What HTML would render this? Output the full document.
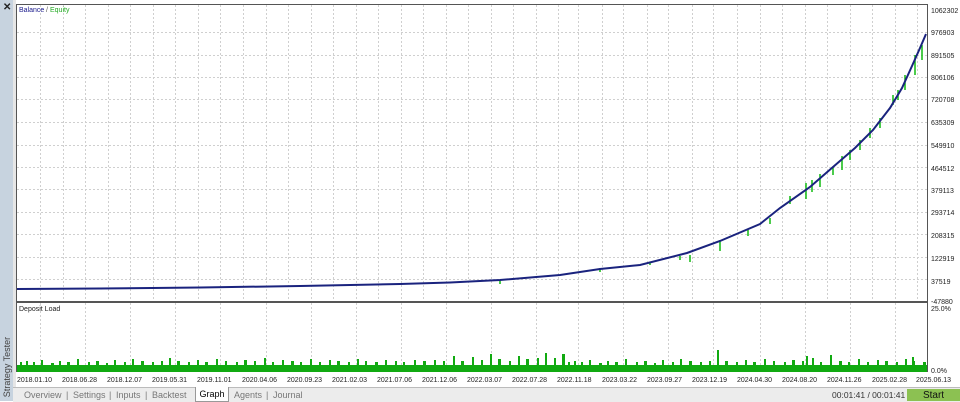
<!DOCTYPE html>
<html><head><meta charset="utf-8"><style>
html,body{margin:0;padding:0;width:960px;height:401px;overflow:hidden;background:#fff;font-family:"Liberation Sans",sans-serif}
.side{position:absolute;left:0;top:0;width:13px;height:401px;background:#c7d3df}
.x{position:absolute;left:3px;top:2px;font-size:10px;font-weight:bold;color:#222}
.vt{position:absolute;left:-28px;top:362px;transform:rotate(-90deg);font-size:9px;color:#444;width:70px;text-align:center}
.tabs{position:absolute;left:13px;top:387px;width:947px;height:14px;background:#ececec;border-top:1px solid #bbb;font-size:9px;color:#777}
.tabs span{position:absolute;top:2px}
.graph{position:absolute;left:182px;top:-1px;width:32px;height:14px;background:#fff;border:1px solid #999;border-top:none;color:#000;text-align:center;line-height:14px}
.start{position:absolute;left:907px;top:389px;width:53px;height:12px;background:#8cc152;font-size:10px;text-align:center;line-height:13px;color:#111}
.time{position:absolute;left:832px;top:390px;font-size:8.5px;color:#333;white-space:nowrap}
</style></head><body>
<div class="side"><div class="x">✕</div><div class="vt">Strategy Tester</div></div>
<svg width="960" height="401" style="position:absolute;left:0;top:0" font-family="Liberation Sans" font-size="7">
<defs><clipPath id="dc"><rect x="17" y="303" width="910" height="69"/></clipPath></defs>
<rect x="13" y="0" width="3" height="387" fill="#e6e6e6"/>
<rect x="16.5" y="4.5" width="911" height="297" fill="#fff" stroke="#555"/>
<rect x="16.5" y="302.5" width="911" height="69" fill="#fff" stroke="#555"/>
<g stroke="#cfcfcf" stroke-dasharray="2,2" stroke-width="1">
<path d="M17 32.5H927M17 55.5H927M17 77.5H927M17 99.5H927M17 122.5H927M17 145.5H927M17 167.5H927M17 189.5H927M17 212.5H927M17 234.5H927M17 257.5H927M17 279.5H927"/>
<path d="M40.5 5V301M63.5 5V301M85.5 5V301M108.5 5V301M130.5 5V301M153.5 5V301M175.5 5V301M198.5 5V301M220.5 5V301M243.5 5V301M266.5 5V301M288.5 5V301M311.5 5V301M333.5 5V301M356.5 5V301M378.5 5V301M401.5 5V301M423.5 5V301M446.5 5V301M468.5 5V301M491.5 5V301M513.5 5V301M536.5 5V301M558.5 5V301M578.5 5V301M602.5 5V301M623.5 5V301M647.5 5V301M668.5 5V301M692.5 5V301M713.5 5V301M737.5 5V301M760.5 5V301M782.5 5V301M805.5 5V301M827.5 5V301M850.5 5V301M872.5 5V301M895.5 5V301M917.5 5V301"/>
<path d="M40.5 303V371M85.5 303V371M130.5 303V371M175.5 303V371M220.5 303V371M266.5 303V371M311.5 303V371M356.5 303V371M401.5 303V371M446.5 303V371M491.5 303V371M536.5 303V371M578.5 303V371M623.5 303V371M668.5 303V371M713.5 303V371M760.5 303V371M805.5 303V371M850.5 303V371M895.5 303V371"/>
</g>
<text x="19" y="12" fill="#1a1a8c">Balance</text><text x="46" y="12" fill="#555">/</text><text x="50" y="12" fill="#22aa22">Equity</text>
<text x="19" y="311" fill="#222">Deposit Load</text>
<g stroke="#11bb11" stroke-width="1.5" fill="none">
<path d="M690 255V262M720 240V251M748 230V236M790 196V204M806 183V199M820 174V187M833 167V175M842 156V170M860 140V150M880 118V128M893 95V105M905 75V90M915 55V75M922 45V60M500 280V284M600 268V272M650 262V265M680 256V260M770 218V224M812 180V192M850 150V160M870 128V138M898 90V100"/>
</g>
<polyline fill="none" stroke="#1a237e" stroke-width="2" points="17,289 100,288.5 200,287.5 300,286 400,284 450,282.5 500,280 560,275 600,269 640,265 687,253 720,241 760,224 780,208 810,187 833,167 855,148 873,130 890,108 902,88 912,66 920,48 926,34"/>
<g clip-path="url(#dc)">
<path id="dp" fill="#11aa11" d="M17 372V365h3v-3h2v3h4v-4h2v4h5v-3h2v3h6v-5h2v5h8v-2h3v2h5v-4h2v4h6v-3h3v3h7v-6h2v6h9v-3h2v3h6v-4h3v4h7v-2h2v2h6v-5h2v5h8v-3h2v3h6v-6h2v6h7v-4h3v4h8v-3h2v3h7v-4h2v4h6v-7h2v7h6v-4h3v4h8v-3h2v3h7v-5h2v5h6v-3h3v3h8v-6h2v6h7v-4h2v4h9v-3h2v3h6v-5h3v5h7v-4h2v4h8v-7h2v7h6v-3h2v3h8v-5h2v5h7v-4h3v4h6v-3h2v3h8v-6h2v6h7v-3h2v3h8v-5h2v5h6v-4h3v4h8v-3h2v3h7v-6h2v6h6v-4h2v4h8v-3h3v3h7v-5h2v5h8v-4h2v4h6v-3h2v3h9v-5h2v5h7v-4h3v4h8v-5h2v5h7v-4h2v4h8v-9h2v9h6v-4h3v4h8v-8h2v8h7v-5h2v5h7v-11h2v11h6v-6h3v6h8v-4h2v4h7v-9h2v9h6v-6h3v6h8v-7h2v7h6v-12h2v12h7v-7h2v7h6v-11h3v11h4v7z"/>
<use href="#dp" transform="translate(548,0)"/>
<rect x="717" y="350" width="2" height="22" fill="#11aa11"/>
<rect x="806" y="356" width="2" height="16" fill="#11aa11"/>
<rect x="830" y="355" width="2" height="17" fill="#11aa11"/>
<rect x="912" y="357" width="2" height="15" fill="#11aa11"/>
</g>
<g fill="#222" font-size="7">
<text x="931" y="13">1062302</text><text x="931" y="35">976903</text><text x="931" y="58">891505</text><text x="931" y="80">806106</text><text x="931" y="102">720708</text><text x="931" y="125">635309</text><text x="931" y="148">549910</text><text x="931" y="171">464512</text><text x="931" y="193">379113</text><text x="931" y="215">293714</text><text x="931" y="238">208315</text><text x="931" y="261">122919</text><text x="931" y="284">37519</text><text x="931" y="304">-47880</text><text x="931" y="311">25.0%</text><text x="931" y="373">0.0%</text>
</g>
<g fill="#222" font-size="7">
<text x="17" y="382">2018.01.10</text><text x="62" y="382">2018.06.28</text><text x="107" y="382">2018.12.07</text><text x="152" y="382">2019.05.31</text><text x="197" y="382">2019.11.01</text><text x="242" y="382">2020.04.06</text><text x="287" y="382">2020.09.23</text><text x="332" y="382">2021.02.03</text><text x="377" y="382">2021.07.06</text><text x="422" y="382">2021.12.06</text><text x="467" y="382">2022.03.07</text><text x="512" y="382">2022.07.28</text><text x="557" y="382">2022.11.18</text><text x="602" y="382">2023.03.22</text><text x="647" y="382">2023.09.27</text><text x="692" y="382">2023.12.19</text><text x="737" y="382">2024.04.30</text><text x="782" y="382">2024.08.20</text><text x="827" y="382">2024.11.26</text><text x="872" y="382">2025.02.28</text><text x="916" y="382">2025.06.13</text>
</g>
</svg>
<div class="tabs">
<span style="left:11px">Overview</span><span style="left:53px">|</span><span style="left:60px">Settings</span><span style="left:96px">|</span><span style="left:103px">Inputs</span><span style="left:132px">|</span><span style="left:139px">Backtest</span>
<div class="graph">Graph</div>
<span style="left:221px">Agents</span><span style="left:253px">|</span><span style="left:260px">Journal</span>
</div>
<div class="time">00:01:41 / 00:01:41</div>
<div class="start">Start</div>
</body></html>
